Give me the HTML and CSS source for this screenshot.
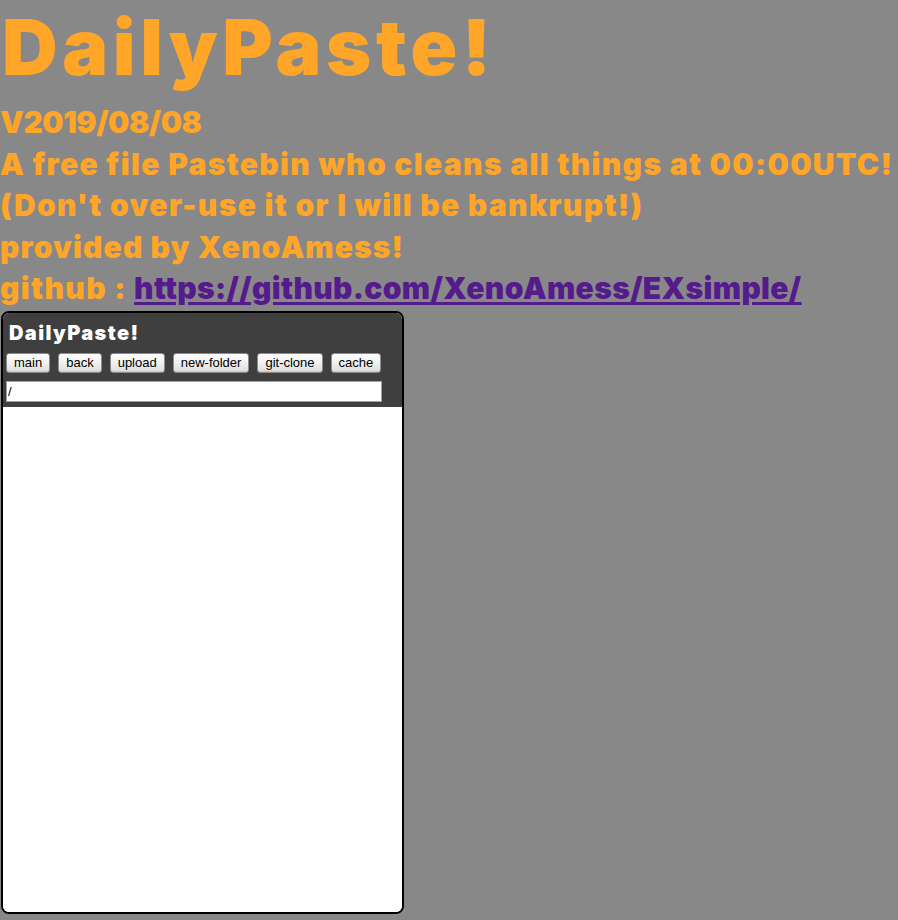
FILE: index.html
```html
<!DOCTYPE html>
<html>
<head>
<meta charset="utf-8">
<title>DailyPaste!</title>
<link rel="stylesheet" href="styles.css">
</head>
<body>
<header class="intro">
  <h1 class="brand">DailyPaste!</h1>
  <p class="line line-version">V2019/08/08</p>
  <p class="line">A free file Pastebin who cleans all things at 00:00UTC!</p>
  <p class="line">(Don't over-use it or I will be bankrupt!)</p>
  <p class="line line-author">provided by XenoAmess!</p>
  <p class="line">github : <a class="repo" href="#">https://github.com/XenoAmess/EXsimple/</a></p>
</header>
<section class="panel">
  <div class="panel-head">
    <div class="panel-title">DailyPaste!</div>
    <div class="toolbar">
      <button class="btn">main</button>
      <button class="btn">back</button>
      <button class="btn">upload</button>
      <button class="btn">new-folder</button>
      <button class="btn">git-clone</button>
      <button class="btn">cache</button>
    </div>
    <input class="path" type="text" value="/">
  </div>
  <div class="panel-body"></div>
</section>
</body>
</html>
```
FILE: styles.css
```css
html, body {
  margin: 0;
  padding: 0;
}
body {
  background: #888888;
  color: #ffa628;
  font-family: "Inter", "DejaVu Sans", sans-serif;
  font-weight: 900;
}
.intro {
  display: flex;
  flex-direction: column;
}
.brand {
  margin: 0 0 8px 0;
  padding-left: 2px;
  font-size: 77px;
  line-height: 94px;
  font-weight: 900;
  letter-spacing: 4.6px;
  white-space: nowrap;
}
.line {
  margin: 0;
  font-size: 30px;
  line-height: 41.5px;
  letter-spacing: 1.35px;
  white-space: nowrap;
}
.line-version {
  letter-spacing: -0.45px;
}
.line-author {
  letter-spacing: 1.12px;
}
.repo {
  color: #551a8b;
  letter-spacing: 0.35px;
  text-decoration: underline;
  text-decoration-thickness: 3px;
  text-underline-offset: 3px;
}
.panel {
  margin: 1px 0 0 1px;
  width: 399px;
  height: 599px;
  border: 2px solid #000;
  border-radius: 8px;
  overflow: hidden;
  background: #fff;
  display: flex;
  flex-direction: column;
}
.panel-head {
  background: #3f3f3f;
  padding: 8px 3px 5px 3px;
  display: flex;
  flex-direction: column;
  gap: 8px;
}
.panel-title {
  color: #fff;
  font-size: 20px;
  line-height: 24px;
  letter-spacing: 1.4px;
  padding-left: 3px;
  white-space: nowrap;
}
.toolbar {
  display: flex;
  gap: 8px;
}
.btn {
  font-family: "Liberation Sans", Arial, sans-serif;
  font-weight: 400;
  font-size: 13px;
  line-height: 18px;
  height: 20px;
  padding: 0 7px;
  margin: 0;
  border: 1px solid #8c8c8c;
  border-radius: 3px;
  color: #000;
  background: linear-gradient(#ffffff, #f2f2f2 45%, #dcdcdc);
  box-shadow: inset 0 -1px 0 #c8c8c8;
}
.path {
  box-sizing: border-box;
  width: 376px;
  height: 21px;
  margin: 0;
  padding: 0 1px;
  border: 1px solid #a0a0a0;
  background: #fff;
  color: #000;
  font-family: "Liberation Sans", Arial, sans-serif;
  font-weight: 400;
  font-size: 13px;
  outline: none;
}
.panel-body {
  flex: 1;
  background: #fff;
}
```
